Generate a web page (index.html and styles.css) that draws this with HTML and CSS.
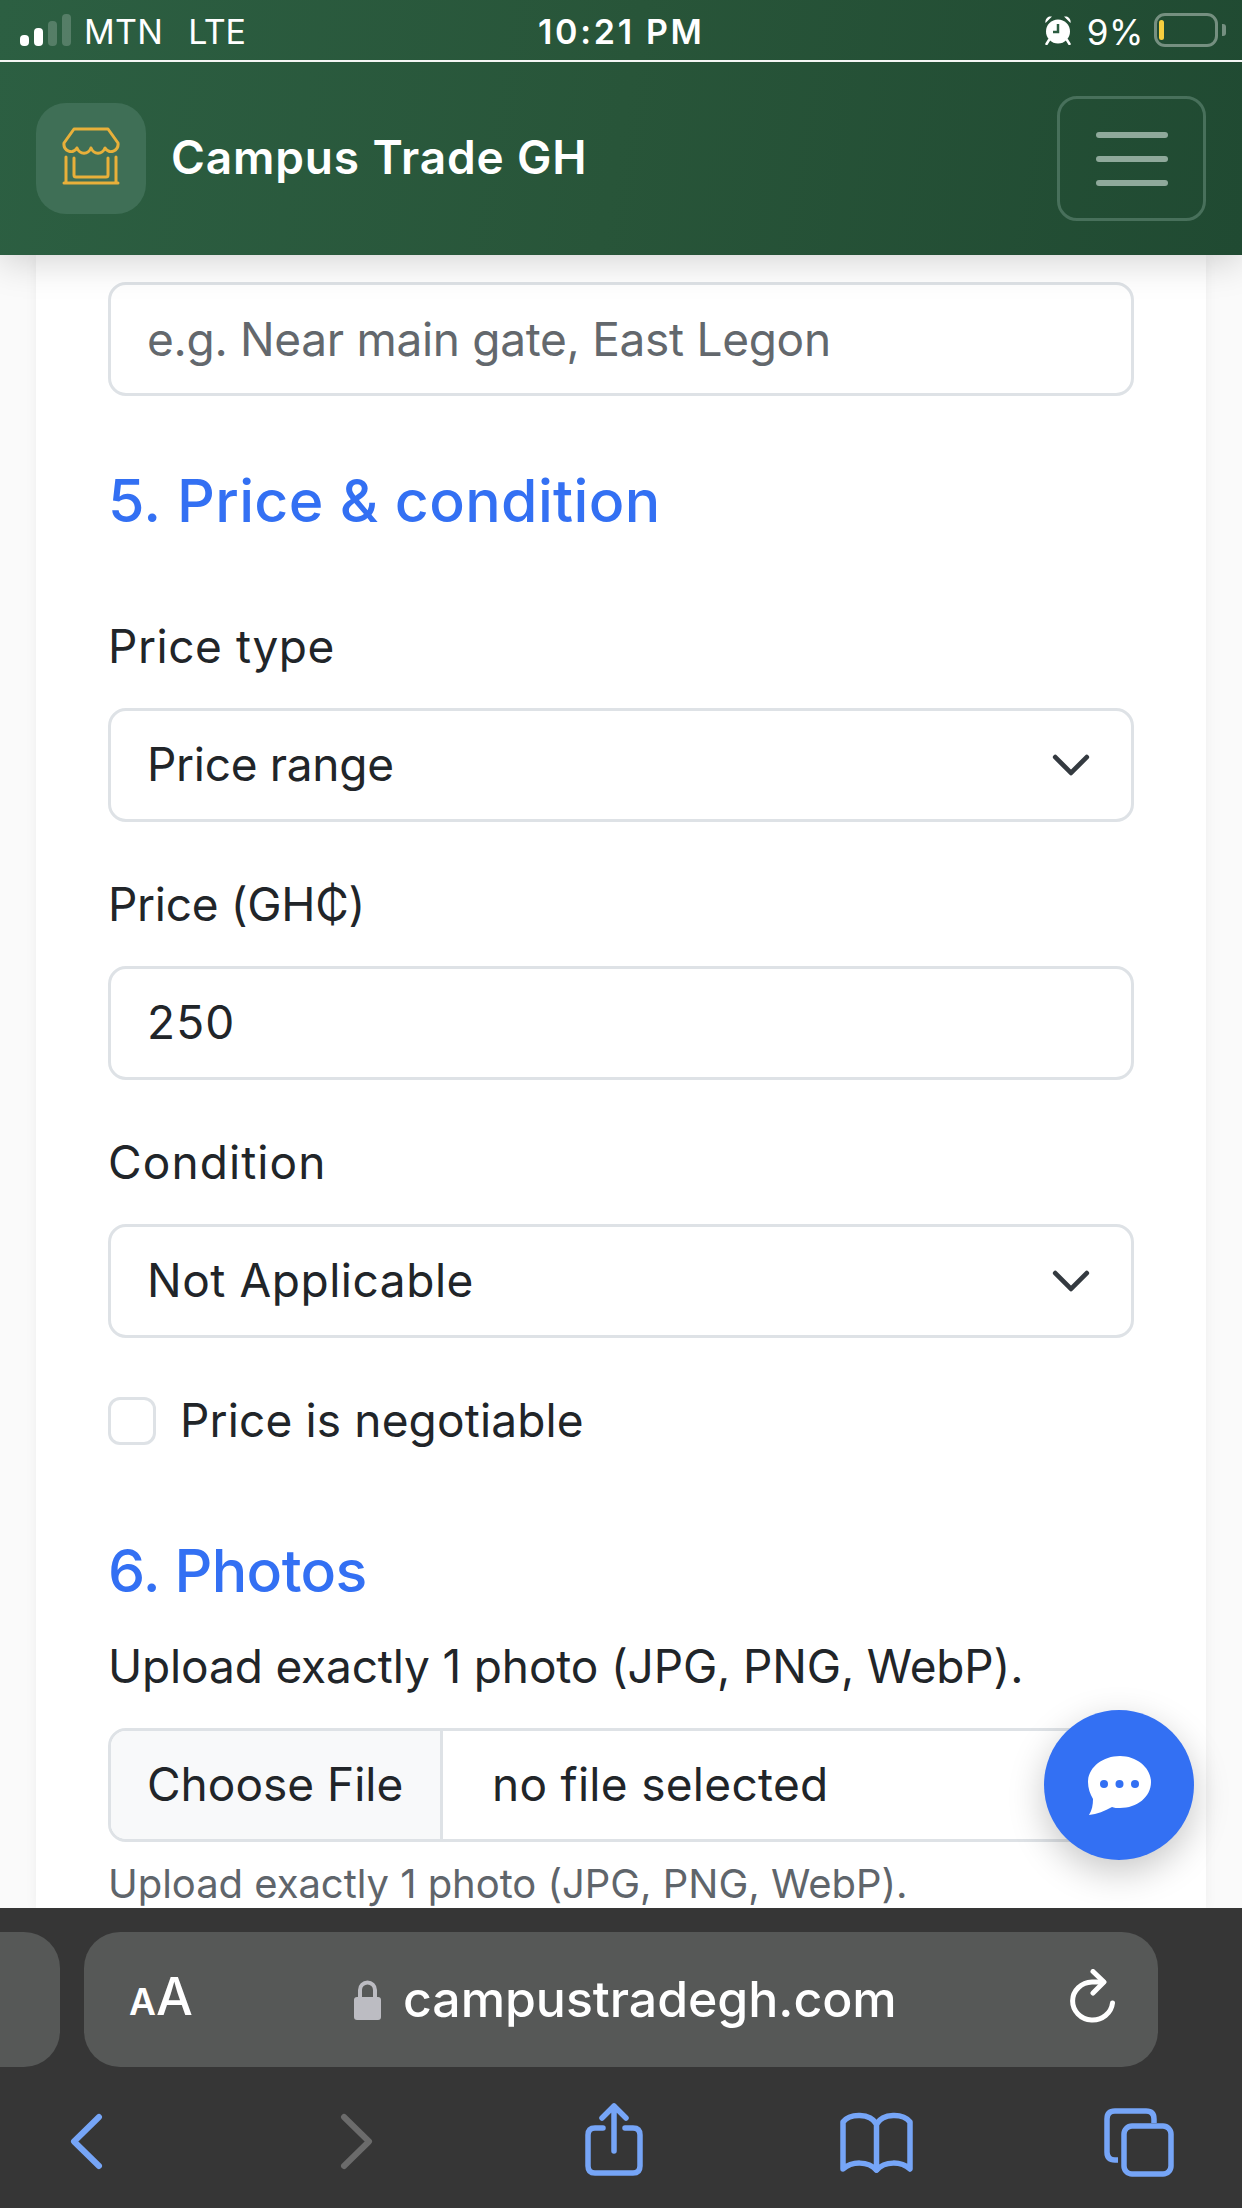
FILE: index.html
```html
<!DOCTYPE html>
<html lang="en">
<head>
<meta charset="utf-8">
<title>Campus Trade GH</title>
<link rel="stylesheet" href="styles.css">
</head>
<body>
<div class="phone">
  <div class="top-gradient">
    <div class="status">
      <div class="status-left">
        <div class="signal"><i class="on b1"></i><i class="on b2"></i><i class="b3"></i><i class="b4"></i></div>
        <span class="carrier">MTN</span>
        <span class="carrier lte">LTE</span>
      </div>
      <div class="clock">10:21 PM</div>
      <div class="status-right">
        <svg class="alarm" viewBox="0 0 28 30" width="28" height="30" aria-hidden="true">
          <circle cx="14" cy="16.5" r="12" fill="#fff"/>
          <path d="M1.5 8 A5.500 5.500 0 0 1 8 1.500 Z M26.500 8 A5.500 5.500 0 0 0 20 1.500 Z" fill="#fff"/>
          <path d="M5 25 L2.500 29 M23 25 L25.500 29" stroke="#fff" stroke-width="2.500" stroke-linecap="round"/>
          <path d="M14 9 V17 H9" stroke="#2b5c40" stroke-width="2.500" fill="none"/>
        </svg>
        <span class="pct">9%</span>
        <div class="battery"><div class="level"></div></div>
        <div class="nub"></div>
      </div>
    </div>
    <div class="status-line"></div>
    <header class="nav">
      <div class="brand">
        <div class="logo">
          <svg viewBox="0 0 58 64" width="58" height="64" fill="none" stroke="#e8b03a" stroke-width="3" stroke-linecap="round" stroke-linejoin="round" aria-hidden="true">
            <path d="M12 2 H46 L56 16 C57 24 47 28 43 21 C40 28 32 28 29 21 C26 28 18 28 15 21 C11 28 1 24 2 16 Z"/>
            <path d="M4 30 V56 M54 30 V56 M2 56 H56"/>
            <path d="M12 31 V48 Q12 50 14 50 H44 Q46 50 46 48 V31"/>
          </svg>
        </div>
        <span class="brand-name">Campus Trade GH</span>
      </div>
      <button class="toggler" type="button" aria-label="Menu"><i></i><i></i><i></i></button>
    </header>
  </div>

  <main class="page">
    <form class="card">
      <input class="control first" type="text" placeholder="e.g. Near main gate, East Legon">
      <h2 class="section section-price">5. Price &amp; condition</h2>

      <label class="label label-first ls-type">Price type</label>
      <div class="control select"><span>Price range</span>
        <svg class="chev" viewBox="0 0 16 16" width="42" height="42" aria-hidden="true"><path d="m2 5 6 6 6-6" fill="none" stroke="#343a40" stroke-width="1.800" stroke-linecap="round" stroke-linejoin="round"/></svg>
      </div>

      <label class="label">Price (GH₵)</label>
      <input class="control value-num" type="text" value="250">

      <label class="label ls-cond">Condition</label>
      <div class="control select ls-na"><span>Not Applicable</span>
        <svg class="chev" viewBox="0 0 16 16" width="42" height="42" aria-hidden="true"><path d="m2 5 6 6 6-6" fill="none" stroke="#343a40" stroke-width="1.800" stroke-linecap="round" stroke-linejoin="round"/></svg>
      </div>

      <div class="check"><span class="box"></span><span class="check-text">Price is negotiable</span></div>

      <h2 class="section section-photos">6. Photos</h2>
      <p class="upload-note">Upload exactly 1 photo (JPG, PNG, WebP).</p>
      <div class="file">
        <span class="file-btn">Choose File</span>
        <span class="file-name">no file selected</span>
      </div>
      <p class="help">Upload exactly 1 photo (JPG, PNG, WebP).</p>
    </form>
    <button class="fab" type="button" aria-label="Chat">
      <svg viewBox="0 0 63 59" width="63" height="59" aria-hidden="true">
        <path d="M32 0 C49 0 63 12 63 26 C63 41 49 52 32 52 C29 52 26 52 24 51 C17 55 9 58 1 59 C4 54 5 49 5 43 C2 38 0 32 0 26 C0 12 14 0 32 0 Z" fill="#fff"/>
        <circle cx="16" cy="28" r="4" fill="#3370f3"/><circle cx="31.500" cy="28" r="4" fill="#3370f3"/><circle cx="47" cy="28" r="4" fill="#3370f3"/>
      </svg>
    </button>
  </main>

  <footer class="safari">
    <div class="url-row">
      <div class="pill-prev"></div>
      <div class="pill-url">
        <span class="aa"><small>A</small>A</span>
        <div class="address">
          <svg viewBox="0 0 27 40" width="27" height="40" aria-hidden="true">
            <path d="M6 18 V10 A7.500 7.500 0 0 1 21 10 V18" fill="none" stroke="#bcbcc2" stroke-width="4"/>
            <rect x="0" y="17" width="27" height="23" rx="3" fill="#bcbcc2"/>
          </svg>
          <span class="domain">campustradegh.com</span>
        </div>
        <svg class="reload" viewBox="0 0 45 55" width="45" height="55" fill="none" stroke="#fff" stroke-width="5" stroke-linecap="round" stroke-linejoin="round" aria-hidden="true">
          <path d="M42.500 34 A20 19 0 1 1 22 13 H33"/>
          <path d="M23 2.500 L34 13 L23 24"/>
        </svg>
      </div>
    </div>
    <nav class="tools">
      <svg class="tool-back" viewBox="0 0 33 57" width="33" height="57" fill="none" stroke="#76a5f7" stroke-width="6" stroke-linecap="round" stroke-linejoin="round" aria-hidden="true"><path d="M29 4 L4 28.500 L29 53"/></svg>
      <svg class="tool-forward" viewBox="0 0 33 57" width="33" height="57" fill="none" stroke="#6b6b6b" stroke-width="6" stroke-linecap="round" stroke-linejoin="round" aria-hidden="true"><path d="M4 4 L29 28.500 L4 53"/></svg>
      <svg class="tool-share" viewBox="0 0 58 73" width="58" height="73" fill="none" stroke="#76a5f7" stroke-width="5.500" stroke-linecap="round" stroke-linejoin="round" aria-hidden="true">
        <path d="M29 3 V48 M17 15 L29 3 L41 15"/>
        <path d="M18 25 H10 Q3 25 3 32 V63 Q3 70 10 70 H48 Q55 70 55 63 V32 Q55 25 48 25 H40"/>
      </svg>
      <svg class="tool-book" viewBox="0 0 73 61" width="73" height="61" fill="none" stroke="#76a5f7" stroke-width="5.500" stroke-linecap="round" stroke-linejoin="round" aria-hidden="true">
        <path d="M36.500 12 C30 1 10 1 3 10 V57 C12 49 28 49 36.500 58 C45 49 61 49 70 57 V10 C63 1 43 1 36.500 12 Z"/>
        <path d="M36.500 12 V58"/>
      </svg>
      <svg class="tool-tabs" viewBox="0 0 70 69" width="70" height="69" fill="none" stroke="#76a5f7" stroke-width="5.500" stroke-linejoin="round" aria-hidden="true">
        <path d="M14 52 H11 Q3 52 3 44 V11 Q3 3 11 3 H42 Q50 3 50 11 V15"/>
        <rect x="20" y="18" width="47" height="48" rx="8"/>
      </svg>
    </nav>
  </footer>
</div>
</body>
</html>
```

FILE: styles.css
```css
* { box-sizing: border-box; }
html, body { margin: 0; padding: 0; }
body { width: 1242px; height: 2208px; overflow: hidden; background: #fafafa; font-family: "Inter", "Noto Sans", sans-serif; color: #212529; }
.phone { width: 1242px; height: 2208px; display: flex; flex-direction: column; }

.top-gradient { height: 255px; flex: none; background: linear-gradient(100deg, #2c5f42 0%, #285539 50%, #204a32 100%); position: relative; z-index: 2; box-shadow: 0 6px 36px rgba(0,0,0,.18); }
.status { height: 60px; display: flex; align-items: center; position: relative; color: #fff; }
.status-left { display: flex; align-items: center; padding-left: 20px; flex: 1; }
.signal { display: flex; align-items: flex-end; gap: 5px; height: 32px; margin-right: 13px; }
.signal i { width: 9px; border-radius: 4px; background: rgba(255,255,255,.2); display: block; }
.signal i.on { background: #fff; }
.b1 { height: 11px; } .b2 { height: 18px; } .b3 { height: 25px; } .b4 { height: 32px; }
.carrier { font-size: 34px; font-weight: 400; letter-spacing: .3px; line-height: 40px; margin-top: 3px; }
.lte { margin-left: 25px; letter-spacing: -.3px; }
.clock { position: absolute; left: 538px; top: 12px; font-size: 34px; font-weight: 600; letter-spacing: 2.700px; line-height: 40px; }
.status-right { display: flex; align-items: center; padding-right: 16px; }
.alarm { margin-right: 15px; }
.pct { font-size: 35px; line-height: 40px; margin-right: 10px; letter-spacing: .6px; margin-top: 3px; }
.battery { width: 64px; height: 34px; border: 3px solid rgba(255,255,255,.38); border-radius: 11px; padding: 4px 2px; }
.level { width: 5px; height: 20px; margin-top: 0; background: #f7cf3f; border-radius: 3px; }
.nub { width: 4px; height: 12px; margin-left: 4px; background: rgba(255,255,255,.38); border-radius: 0 3px 3px 0; }
.status-line { height: 2px; background: #f4f6f4; }

.nav { height: 193px; display: flex; align-items: center; justify-content: space-between; padding: 0 36px; }
.brand { display: flex; align-items: center; gap: 25px; }
.logo { width: 110px; height: 111px; border-radius: 30px; background: #3f6f56; display: flex; align-items: center; justify-content: center; }
.brand-name { color: #fff; font-size: 46px; font-weight: 600; letter-spacing: .85px; line-height: 60px; margin-top: -4px; }
.toggler { width: 149px; height: 125px; border: 3px solid #48705b; border-radius: 20px; background: transparent; display: flex; flex-direction: column; align-items: center; justify-content: center; gap: 18px; padding: 0; }
.toggler i { display: block; width: 72px; height: 6px; border-radius: 3px; background: #8fa99b; }

.page { flex: 1; min-height: 0; position: relative; overflow: hidden; padding: 0 36px; }
.card { height: 100%; background: #fff; padding: 27px 72px 0; box-shadow: 0 0 12px rgba(0,0,0,.05); }

.control { display: flex; align-items: center; width: 100%; height: 114px; border: 3px solid #dee2e6; border-radius: 18px; padding: 0 36px 3px; background: #fff; font-family: inherit; font-size: 46px; color: #212529; letter-spacing: -.3px; outline: none; }
.control::placeholder { color: #63686d; opacity: 1; }
.first { padding-bottom: 0; }
.value-num { letter-spacing: 1.100px; }
.select { justify-content: space-between; padding-right: 39px; }
.ls-na { letter-spacing: .55px; }
.chev { flex: none; margin-top: 2px; }
.section { margin: 0; color: #3370f3; font-size: 59px; font-weight: 450; line-height: 72px; }
.section-price { margin-top: 69px; letter-spacing: .35px; }
.section-photos { margin-top: 75px; padding-top: 3px; height: 72px; letter-spacing: -.6px; }
.label { display: block; font-size: 46px; line-height: 72px; margin-top: 46px; margin-bottom: 26px; letter-spacing: -.3px; }
.label-first { margin-top: 73px; }
.ls-type { letter-spacing: .55px; }
.ls-cond { letter-spacing: 1.100px; }
.check { display: flex; align-items: center; gap: 24px; height: 72px; margin-top: 47px; font-size: 46px; letter-spacing: .15px; }
.check-text { margin-top: -2px; }
.box { width: 48px; height: 48px; flex: none; border: 3px solid #dee2e6; border-radius: 12px; background: #fff; }
.upload-note { margin: 26px 0 26px; font-size: 46px; line-height: 72px; letter-spacing: -.15px; }
.file { display: flex; align-items: stretch; height: 114px; border: 3px solid #dee2e6; border-radius: 18px; overflow: hidden; font-size: 46px; }
.file-btn { width: 332px; flex: none; background: #f8f9fa; border-right: 3px solid #dee2e6; display: flex; align-items: center; padding: 0 0 2px 36px; letter-spacing: 0; }
.file-name { display: flex; align-items: center; padding: 0 0 2px 49px; letter-spacing: .3px; }
.help { margin: 12px 0 0; color: #5f656b; font-size: 40px; line-height: 60px; letter-spacing: -.04px; }

.fab { position: absolute; left: 1044px; top: 1455px; width: 150px; height: 150px; border: 0; border-radius: 50%; background: #3370f3; box-shadow: 0 12px 36px rgba(0,0,0,.22); display: flex; align-items: center; justify-content: center; padding: 0; }

.safari { height: 300px; flex: none; background: #363636; position: relative; z-index: 3; }
.url-row { display: flex; gap: 24px; padding-top: 24px; margin-left: -40px; }
.pill-prev { width: 100px; height: 135px; background: #565857; border-radius: 36px; flex: none; }
.pill-url { width: 1074px; height: 135px; background: #565857; border-radius: 36px; flex: none; display: flex; align-items: center; position: relative; padding-left: 45px; color: #fff; }
.aa { font-size: 52px; font-weight: 500; line-height: 50px; letter-spacing: 0; }
.aa small { font-size: 37px; font-weight: 600; }
.address { position: absolute; left: 270px; top: 44px; display: flex; align-items: center; gap: 22px; }
.domain { font-size: 50px; font-weight: 500; letter-spacing: -.05px; line-height: 50px; margin-top: -2px; }
.reload { position: absolute; left: 986px; top: 37px; }
.tools { position: relative; height: 141px; }
.tools svg { position: absolute; }
.tool-back { left: 70px; top: 46px; }
.tool-forward { left: 340px; top: 46px; }
.tool-share { left: 585px; top: 36px; }
.tool-book { left: 840px; top: 45px; }
.tool-tabs { left: 1104px; top: 41px; }
```
